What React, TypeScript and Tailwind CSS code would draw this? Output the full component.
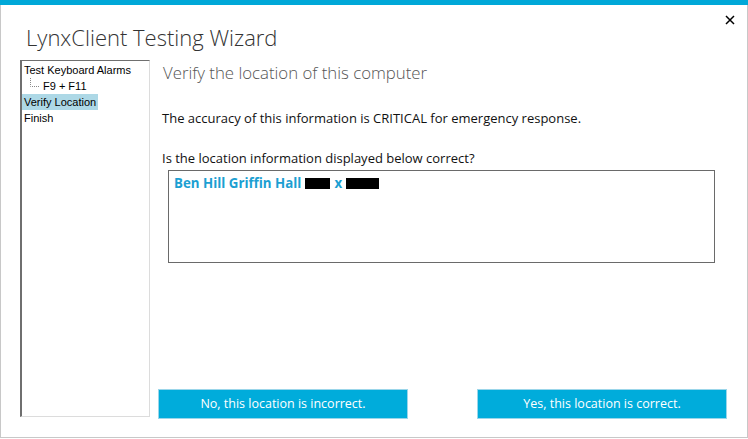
import React from 'react';

const TreeItem: React.FC<{ label: string; selected?: boolean; child?: boolean }> = ({ label, selected, child }) => (
  <div className="flex h-4 items-center">
    {child && (
      <svg width="10" height="16" className="ml-[8px] mr-[1px]" viewBox="0 0 10 16">
        <path d="M0.5 0 V8.5 H9" stroke="#888" strokeWidth="1" strokeDasharray="1 1" fill="none" />
      </svg>
    )}
    <span className={`px-[2px] leading-4 ${selected ? 'bg-[#add8e6]' : ''}`}>{label}</span>
  </div>
);

export default function App() {
  return (
    <div className="w-[748px] h-[439px] bg-white overflow-hidden">
      <div className="h-[5px] bg-[#00a8d8]" />
      <div className="h-[433px] border-x border-b border-[#c8c8c8] flex flex-col">
        <div className="flex justify-between items-start h-[55px]">
          <h1 className="ml-[25px] mt-[18px] text-[22px] leading-[28px] font-light text-[#333] font-['Open_Sans',sans-serif]">
            LynxClient Testing Wizard
          </h1>
          <button className="mt-[7px] mr-[9px] w-4 h-4 flex items-center justify-center">
            <svg width="10" height="10" viewBox="0 0 10 10">
              <path d="M1 1 L9 9 M9 1 L1 9" stroke="#000" strokeWidth="1.5" />
            </svg>
          </button>
        </div>
        <div className="flex">
          <div className="ml-[19px] w-[130px] h-[357px] border-l-2 border-t border-l-[#6f6f6f] border-t-[#6f6f6f] border-r border-b border-r-[#dcdcdc] border-b-[#dcdcdc] pt-[1px] text-[11px] text-black font-['Liberation_Sans',sans-serif]">
            <TreeItem label="Test Keyboard Alarms" />
            <TreeItem label="F9 + F11" child />
            <TreeItem label="Verify Location" selected />
            <TreeItem label="Finish" />
          </div>
          <div className="ml-[8px] flex-1 flex flex-col font-['Open_Sans',sans-serif]">
            <h2 className="ml-[5px] mt-[1px] text-[16.8px] leading-[24px] font-light text-[#555]">
              Verify the location of this computer
            </h2>
            <p className="ml-[4px] mt-[25px] text-[13px] leading-[16px] text-[#111]">
              The accuracy of this information is CRITICAL for emergency response.
            </p>
            <p className="ml-[4px] mt-[24px] text-[13px] leading-[16px] text-[#111]">
              Is the location information displayed below correct?
            </p>
            <div className="ml-[10px] mt-[4px] w-[547px] h-[93px] border border-[#6a6a6a] px-[5px] pt-[3px]">
              <div className="flex items-center gap-[4px] text-[13.3px] font-bold text-[#1c9fd2] leading-[18px]">
                <span>Ben Hill Griffin Hall</span>
                <span className="inline-block w-[25px] h-[11px] bg-black" />
                <span>x</span>
                <span className="inline-block w-[33px] h-[11px] bg-black" />
              </div>
            </div>
            <div className="mt-[126px] flex gap-[69px] text-[12.5px] text-white">
              <button className="w-[250px] h-[30px] bg-[#00acdb] border border-[#9bd6ea]">
                No, this location is incorrect.
              </button>
              <button className="w-[250px] h-[30px] bg-[#00acdb] border border-[#9bd6ea]">
                Yes, this location is correct.
              </button>
            </div>
          </div>
        </div>
      </div>
    </div>
  );
}
